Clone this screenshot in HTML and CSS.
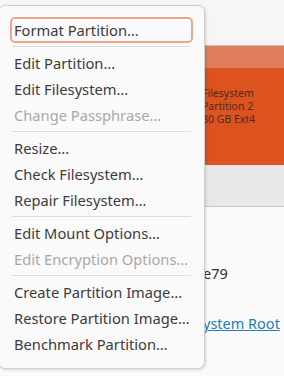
FILE: index.html
```html
<!DOCTYPE html>
<html lang="en">
<head>
    <meta charset="UTF-8">
    <title>Disks - Partition Menu</title>
    <link rel="stylesheet" href="styles.css">
</head>
<body>
    <div class="window">
        <div class="toolbar"></div>
        <div class="volume">
            <div class="volume-top"></div>
            <div class="volume-label">
                <div>Filesystem</div>
                <div>Partition 2</div>
                <div>80 GB Ext4</div>
            </div>
        </div>
        <div class="volume-bar"></div>
        <div class="details">
            <div class="detail uuid">e79</div>
            <div class="detail"><a class="link" href="#">ystem Root</a></div>
        </div>

        <div class="menu">
            <div class="item focus">Format Partition…</div>
            <div class="sep"></div>
            <div class="item">Edit Partition…</div>
            <div class="item">Edit Filesystem…</div>
            <div class="item disabled">Change Passphrase…</div>
            <div class="sep"></div>
            <div class="item">Resize…</div>
            <div class="item">Check Filesystem…</div>
            <div class="item">Repair Filesystem…</div>
            <div class="sep"></div>
            <div class="item">Edit Mount Options…</div>
            <div class="item disabled">Edit Encryption Options…</div>
            <div class="sep"></div>
            <div class="item">Create Partition Image…</div>
            <div class="item">Restore Partition Image…</div>
            <div class="item">Benchmark Partition…</div>
        </div>
    </div>
</body>
</html>
```

FILE: styles.css
```css
body {
    margin: 0;
    font-family: "Noto Sans", "DejaVu Sans", sans-serif;
    background: #fafafa;
    overflow: hidden;
}
.window {
    position: relative;
    width: 284px;
    height: 376px;
    background: #fafafa;
}
.toolbar {
    height: 45px;
    background: #f6f6f6;
    border-bottom: 1px solid #c4c4c4;
}
.volume {
    height: 119px;
    background: #dc5320;
    display: flex;
    flex-direction: column;
}
.volume-top {
    height: 22px;
    background: #de7c5c;
}
.volume-label {
    padding: 19px 0 0 202px;
    font-size: 10.5px;
    line-height: 13px;
    color: #4a2c20;
}
.volume-bar {
    height: 41px;
    background: #e8e8e8;
    border-bottom: 1px solid #c8c8c8;
}
.details {
    padding: 56px 0 0 203px;
}
.detail {
    font-size: 14.5px;
    color: #2e2e2e;
    height: 50px;
    white-space: nowrap;
}
.link {
    color: #1a7fb8;
}
.menu {
    position: absolute;
    left: -2px;
    top: 5px;
    width: 205px;
    padding: 11px 0;
    background: #fafafa;
    border: 1px solid #cfcfcf;
    border-radius: 7px;
    box-shadow: 1px 1px 3px rgba(0, 0, 0, 0.15);
}
.item {
    height: 22px;
    margin: 0 11px 0 11px;
    padding: 0 2px;
    border: 2px solid transparent;
    border-radius: 5px;
    font-size: 14.7px;
    line-height: 22px;
    color: #3c3c3c;
    white-space: nowrap;
}
.item.focus {
    border-color: #f0a48a;
}
.item.disabled {
    color: #a8a8a8;
}
.sep {
    height: 1px;
    margin: 3px 13px;
    background: #dcdcdc;
}
```
